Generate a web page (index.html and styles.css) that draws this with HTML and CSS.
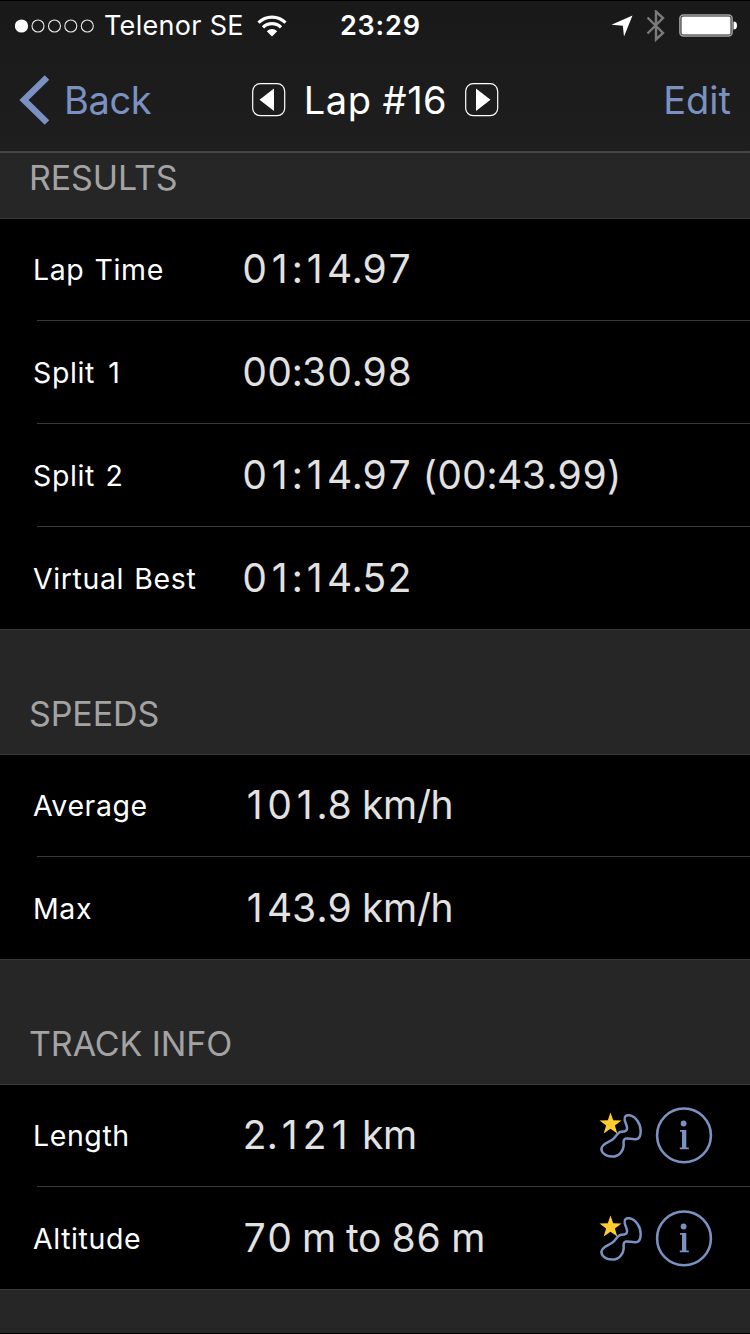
FILE: index.html
```
<!DOCTYPE html>
<html lang="en">
<head>
    <meta charset="UTF-8">
    <meta name="viewport" content="width=device-width, initial-scale=1.0">
    <title>Lap #16</title>
    <link rel="stylesheet" href="styles.css">
</head>
<body>
    <!-- Shared icons -->
    <svg class="defs" width="0" height="0">
        <symbol id="track" viewBox="0 0 46 48">
            <path d="M25.700 9C25 5.500 27 3.800 30.500 4.300C36.500 5.300 41.700 12.500 41.700 20C41.700 25.500 40.500 28 37 28.300C32.500 28.600 29.500 27 26.500 27.600C23.500 28.500 24.800 31.500 24.700 34C24.500 40 20 45.600 13 45.600C6 45.600 2 41 2.500 37.500C3 32.500 10 31.200 13.500 28.500C17 26 18.500 21 22 20.700C25 20.600 27.500 21 28 18C28.500 14.800 26.300 12.500 25.700 9Z" fill="none" stroke="#7a91c1" stroke-width="2.500"/>
            <path d="M11.500 1.500L14.200 9.300L22.500 9.400L15.900 14.500L18.300 22.400L11.500 17.700L4.700 22.400L7.100 14.500L0.500 9.400L8.800 9.300Z" fill="#ffcb2e"/>
        </symbol>
        <symbol id="info" viewBox="0 0 58 58">
            <circle cx="29" cy="29.400" r="26.900" fill="none" stroke="#7a91c1" stroke-width="2.600"/>
            <circle cx="28.600" cy="17.500" r="2.900" fill="#7a91c1"/>
            <path d="M25 24H31.300V41.600H33.800V43.300H24.800V41.600H27V25.800H25Z" fill="#7a91c1"/>
        </symbol>
    </svg>

    <header class="header">
        <div class="status">
            <div class="status-left">
                <svg width="80" height="16" viewBox="0 0 80 16">
                    <circle cx="6.500" cy="8" r="6.600" fill="#fff"/>
                    <g fill="none" stroke="#e8e8e8" stroke-width="1.100">
                        <circle cx="23" cy="8" r="6"/>
                        <circle cx="39.500" cy="8" r="6"/>
                        <circle cx="55.800" cy="8" r="6"/>
                        <circle cx="72.300" cy="8" r="6"/>
                    </g>
                </svg>
                <span class="carrier">Telenor SE</span>
                <svg class="wifi" width="30" height="22" viewBox="0 0 30 22">
                    <g fill="none" stroke="#fff" stroke-width="3.200">
                        <path d="M1.500 7.700A19 19 0 0 1 28.500 7.700"/>
                        <path d="M6 12.400A12.800 12.800 0 0 1 24 12.400"/>
                    </g>
                    <path d="M9.800 16.200A7.300 7.300 0 0 1 20.200 16.200L15 21.400Z" fill="#fff"/>
                </svg>
            </div>
            <span class="clock">23:29</span>
            <div class="status-right">
                <svg width="22" height="22" viewBox="0 0 22 22">
                    <path d="M21.500 0.500L13 21.500L11.800 10.700L0.500 9.800Z" fill="#fff"/>
                </svg>
                <svg class="bluetooth" width="20" height="32" viewBox="0 0 20 32">
                    <path d="M1.500 7.500L17 23L10 29.500V1.500L17 8L1.500 23.500" fill="none" stroke="#7b7b7b" stroke-width="2.400"/>
                </svg>
                <svg class="battery" width="58" height="24" viewBox="0 0 58 24">
                    <rect x="0.900" y="0.900" width="52.200" height="21.200" rx="3.500" fill="none" stroke="#a5a5a5" stroke-width="1.500"/>
                    <rect x="2.500" y="2.500" width="49" height="18" rx="1.500" fill="#fff"/>
                    <path d="M54.500 7.500C57 7.500 58 9 58 11.500S57 15.500 54.500 15.500Z" fill="#fff"/>
                </svg>
            </div>
        </div>
        <nav class="nav">
            <a class="back">
                <svg width="30" height="50" viewBox="0 0 30 50">
                    <path d="M28 2.500L5 25L28 47.500" fill="none" stroke="#7a91c1" stroke-width="6.500"/>
                </svg>
                <span>Back</span>
            </a>
            <div class="title">
                <svg width="34" height="34" viewBox="0 0 34 34">
                    <rect x="0.700" y="0.700" width="32" height="32" rx="7.500" fill="none" stroke="#fff" stroke-width="1.200"/>
                    <path d="M22 5.500V28L7.500 16.700Z" fill="#fff"/>
                </svg>
                <span class="title-text">Lap #16</span>
                <svg width="34" height="34" viewBox="0 0 34 34">
                    <rect x="0.700" y="0.700" width="32" height="32" rx="7.500" fill="none" stroke="#fff" stroke-width="1.200"/>
                    <path d="M11 5.500V28L25.500 16.700Z" fill="#fff"/>
                </svg>
            </div>
            <a class="edit">Edit</a>
        </nav>
    </header>

    <main>
        <h2 class="heading heading-first">RESULTS</h2>
        <div class="group">
            <div class="row"><span class="label">Lap Time</span><span class="value">0<span class="one">1</span>:<span class="one">1</span>4.97</span></div>
            <div class="row"><span class="label">Split <span class="one">1</span></span><span class="value">00:30.98</span></div>
            <div class="row"><span class="label">Split 2</span><span class="value">0<span class="one">1</span>:<span class="one">1</span>4.97 (00:43.99)</span></div>
            <div class="row"><span class="label">Virtual Best</span><span class="value">0<span class="one">1</span>:<span class="one">1</span>4.52</span></div>
        </div>

        <h2 class="heading">SPEEDS</h2>
        <div class="group">
            <div class="row"><span class="label">Average</span><span class="value"><span class="one">1</span>0<span class="one">1</span>.8 km/h</span></div>
            <div class="row"><span class="label">Max</span><span class="value"><span class="one">1</span>43.9 km/h</span></div>
        </div>

        <h2 class="heading">TRACK INFO</h2>
        <div class="group">
            <div class="row">
                <span class="label">Length</span><span class="value">2.<span class="one">1</span>2<span class="one">1</span> km</span>
                <svg class="track-icon"><use href="#track"/></svg>
                <svg class="info-icon"><use href="#info"/></svg>
            </div>
            <div class="row">
                <span class="label">Altitude</span><span class="value">70 m to 86 m</span>
                <svg class="track-icon"><use href="#track"/></svg>
                <svg class="info-icon"><use href="#info"/></svg>
            </div>
        </div>
    </main>
</body>
</html>
```
FILE: styles.css
```
* {
    box-sizing: border-box;
}
body {
    margin: 0;
    height: 1334px;
    background-color: #262626;
    border-top: 1px solid #000;
    border-bottom: 1px solid #000;
    font-family: Inter, "Liberation Sans", sans-serif;
    color: #fff;
    overflow: hidden;
}
svg {
    display: block;
    flex: none;
}
.defs {
    display: none;
}

/* Status bar and navigation */
.header {
    height: 152px;
    background: linear-gradient(#191919, #1e1e1e);
    border-bottom: 2px solid #464646;
}
.status {
    display: grid;
    grid-template-columns: 325px auto 1fr;
    align-items: center;
    height: 49px;
    padding: 0 13px 0 15px;
    font-size: 27px;
}
.status-left, .status-right {
    display: flex;
    align-items: center;
}
.status-right {
    justify-content: flex-end;
}
.carrier {
    margin-left: 9px;
    letter-spacing: 0.3px;
}
.wifi {
    margin-left: 13px;
}
.clock {
    font-weight: 600;
    letter-spacing: 0.8px;
}
.bluetooth {
    margin-left: 13px;
}
.battery {
    margin-left: 13px;
}
.nav {
    display: grid;
    grid-template-columns: 1fr auto 1fr;
    align-items: center;
    height: 99px;
    padding: 0 18px 0 19px;
    font-size: 38px;
}
.back, .edit {
    color: #7a91c1;
}
.back {
    display: flex;
    align-items: center;
    gap: 15px;
    letter-spacing: -0.4px;
}
.edit {
    padding-right: 1px;
    text-align: right;
}
.title {
    display: flex;
    align-items: center;
    gap: 18px;
}
.title-text {
    letter-spacing: 0.5px;
}

/* Grouped table */
.heading {
    display: flex;
    align-items: flex-end;
    height: 124px;
    margin: 0;
    padding: 0 29px 20px;
    font-size: 34px;
    font-weight: 400;
    letter-spacing: -0.1px;
    color: #a3a3a3;
}
.heading-first {
    height: 65px;
}
.group {
    background-color: #000;
    border-top: 1px solid #383838;
    border-bottom: 1px solid #383838;
}
.row {
    display: flex;
    align-items: center;
    height: 101px;
    margin-left: 37px;
    padding: 0 37px 1px 0;
}
.row + .row {
    height: 103px;
    padding-top: 1px;
    border-top: 1px solid #383838;
}
.label {
    width: 209px;
    margin-left: -4px;
    padding-top: 2px;
    font-size: 28.5px;
    line-height: 34px;
    letter-spacing: 0.6px;
    word-spacing: 2px;
    font-variant-numeric: tabular-nums;
}
.value {
    flex: 1;
    font-size: 39px;
    line-height: 48px;
    letter-spacing: -0.35px;
    font-variant-numeric: tabular-nums;
    color: #e2e2e2;
}
/* Plain "1" without the foot, kept as wide as the other digits */
.one {
    display: inline-block;
    width: 0.64em;
    text-align: center;
    font-variant-numeric: normal;
}
.track-icon {
    width: 46px;
    height: 48px;
    margin-right: 10px;
}
.info-icon {
    width: 58px;
    height: 58px;
}
```
